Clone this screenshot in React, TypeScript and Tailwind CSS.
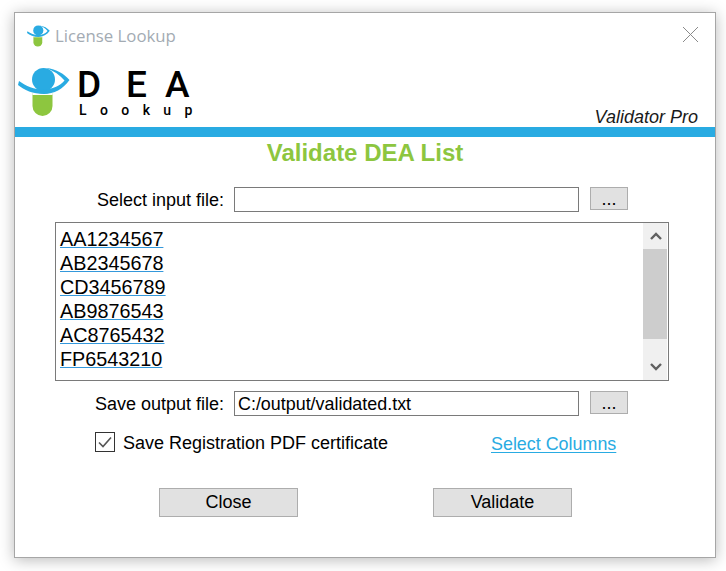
const sans = "font-['Liberation_Sans',Arial,sans-serif]";

function Eye({ className }: { className: string }) {
  return (
    <svg viewBox="0 0 52 48" className={className}>
      <path d="M14.5 25 H34.5 V38 A10 10 0 0 1 14.5 38 Z" fill="#8dc63f" />
      <path d="M14 22 C18 26 30 27 35 23 L34.5 27 H14.5 Z" fill="#ffffff" />
      <circle cx="25.5" cy="11.5" r="11.5" fill="#29abe2" />
      <path d="M1 13 C8 18 16 21.5 26 21.5 C34 21.5 42 18 46.5 12.5 C42 7 36 3 28 0 C39 1 46 6 51.5 12 C45 21 36 26 26 26 C15 26 6 22 0 17 Z" fill="#29abe2" />
    </svg>
  );
}

function Dots() {
  return (
    <button className={`${sans} w-[38px] h-[23px] bg-[#e1e1e1] border border-[#adadad] text-[18px] leading-[20px] text-black`}>
      ...
    </button>
  );
}

function Row({ label, value }: { label: string; value: string }) {
  return (
    <div className="flex items-center h-[25px] pl-[219px]">
      <div className="w-0 flex justify-end">
        <span className="whitespace-nowrap pr-[10px] pt-[2px] text-[18px]">{label}</span>
      </div>
      <div className="w-[345px] h-[25px] border border-[#7a7a7a] bg-white pl-[3px] text-[17.9px] leading-[24px] text-black">{value}</div>
      <div className="ml-[11px]"><Dots /></div>
    </div>
  );
}

const items = ["AA1234567", "AB2345678", "CD3456789", "AB9876543", "AC8765432", "FP6543210"];

export default function App() {
  return (
    <div className={`${sans} w-[726px] h-[571px] bg-white pt-[12px] pl-[14px] overflow-hidden text-black`}>
      <div className="w-[702px] h-[546px] border border-[#a6a6a6] bg-white shadow-[0_2px_14px_rgba(0,0,0,0.28)] flex flex-col">
        <div className="flex items-start justify-between h-[50px] pl-[12px] pr-[17px] pt-[10px]">
          <div className="flex items-center gap-[5px]">
            <Eye className="w-[23px] h-[22px]" />
            <span className="font-['Open_Sans',sans-serif] text-[16.8px] leading-[25px] text-[#a3abb3]">License Lookup</span>
          </div>
          <svg viewBox="0 0 15 15" className="w-[15px] h-[15px] mt-[4px]">
            <path d="M0 0 L15 15 M15 0 L0 15" stroke="#8a8a8a" strokeWidth="1" fill="none" />
          </svg>
        </div>
        <div className="flex justify-between items-end h-[64px] pl-[3px] pr-[17px]">
          <div className="flex self-start pt-[5px]">
            <Eye className="w-[52px] h-[48px]" />
            <div className="ml-[7px] -mt-[1px] flex flex-col font-['Roboto',sans-serif] font-medium text-black">
              <div className="flex text-[37px] leading-[35px]">
                <span className="w-[49px]">D</span>
                <span className="w-[39px]">E</span>
                <span>A</span>
              </div>
              <div className="text-[14px] leading-[15px] tracking-[13.4px] mt-[1px] pl-[2px]">Lookup</div>
            </div>
          </div>
          <span className="italic text-[18px] leading-[20px] text-[#1a1a1a] mb-0">Validator Pro</span>
        </div>
        <div className="h-[10px] bg-[#29abe2]" />
        <div className="text-center text-[24px] leading-[30px] font-bold text-[#8dc63f] mt-[1px]">Validate DEA List</div>
        <div className="mt-[19px]"><Row label="Select input file:" value="" /></div>
        <div className="mt-[10px] ml-[40px] w-[614px] h-[159px] border border-[#7a7a7a] flex">
          <div className="flex-1 pl-[4px] pt-[4px] text-[19.8px] leading-[24px]">
            {items.map((t) => (
              <div key={t}><span className="underline decoration-[#3498db] decoration-1 underline-offset-[1px]">{t}</span></div>
            ))}
          </div>
          <div className="w-[24px] mr-[1px] bg-[#f0f0f0] flex flex-col items-center justify-between">
            <div className="h-[26px] flex items-center justify-center">
              <svg viewBox="0 0 12 8" className="w-[12px] h-[8px] ml-[1px]"><path d="M1 7 L6 2 L11 7" stroke="#606060" strokeWidth="2.4" fill="none" /></svg>
            </div>
            <div className="h-[90px] w-full bg-[#cdcdcd]" />
            <div className="h-[41px] flex items-center justify-center pt-[14px]">
              <svg viewBox="0 0 12 8" className="w-[12px] h-[8px] ml-[1px]"><path d="M1 1 L6 6 L11 1" stroke="#606060" strokeWidth="2.4" fill="none" /></svg>
            </div>
          </div>
        </div>
        <div className="mt-[10px]"><Row label="Save output file:" value="C:/output/validated.txt" /></div>
        <div className="flex items-center mt-[15px] pl-[80px] h-[22px]">
          <div className="w-[20px] h-[20px] border border-[#333333] flex items-center justify-center bg-white">
            <svg viewBox="0 0 14 12" className="w-[14px] h-[12px]"><path d="M1 6.5 L5 10.5 L13 1.5" stroke="#555555" strokeWidth="1.6" fill="none" /></svg>
          </div>
          <span className="ml-[8px] pt-[2px] text-[18px] w-[368px]">Save Registration PDF certificate</span>
          <a className="text-[17.9px] underline text-[#29abe2] underline-offset-2 mt-[4px]">Select Columns</a>
        </div>
        <div className="flex mt-[35px] pl-[144px] gap-[135px]">
          <button className="w-[139px] h-[29px] bg-[#e1e1e1] border border-[#adadad] text-[18px]">Close</button>
          <button className="w-[139px] h-[29px] bg-[#e1e1e1] border border-[#adadad] text-[18px]">Validate</button>
        </div>
      </div>
    </div>
  );
}
